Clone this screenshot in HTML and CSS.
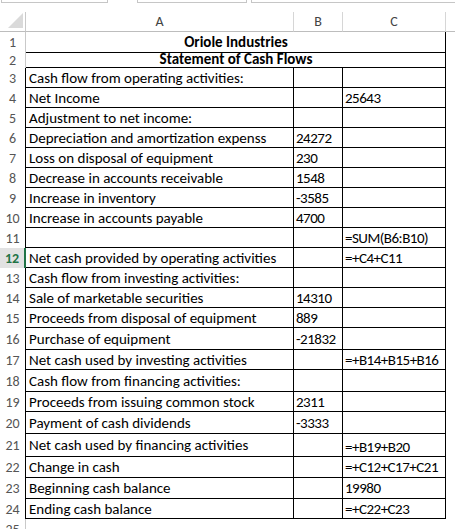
FILE: index.html
```html
<!DOCTYPE html>
<html lang="en">
<head>
    <meta charset="UTF-8">
    <meta name="viewport" content="width=device-width, initial-scale=1.0">
    <title>Statement of Cash Flows</title>
    <link rel="stylesheet" href="styles.css">
</head>
<body>
    <div class="toolbar">
        <div class="box name-box"></div>
        <div class="box fx-box"></div>
        <div class="box formula-box"></div>
    </div>

    <div class="sheet">
        <div class="row head-row">
            <div class="corner">
                <svg width="15" height="15" viewBox="0 0 15 15"><polygon points="15,0 15,15 0,15" fill="#dadada"/></svg>
            </div>
            <div class="col-head">A</div>
            <div class="col-head">B</div>
            <div class="col-head">C</div>
            <div class="col-head filler"></div>
        </div>

        <div class="row h21">
            <div class="num">1</div>
            <div class="cell title">Oriole Industries</div>
        </div>
        <div class="row h15">
            <div class="num">2</div>
            <div class="cell title">Statement of Cash Flows</div>
        </div>

        <div class="row boxed">
            <div class="num">3</div>
            <div class="cell">Cash flow from operating activities:</div>
            <div class="cell"></div>
            <div class="cell"></div>
        </div>
        <div class="row boxed">
            <div class="num">4</div>
            <div class="cell">Net Income</div>
            <div class="cell"></div>
            <div class="cell">25643</div>
        </div>
        <div class="row boxed">
            <div class="num">5</div>
            <div class="cell">Adjustment to net income:</div>
            <div class="cell"></div>
            <div class="cell"></div>
        </div>
        <div class="row boxed">
            <div class="num">6</div>
            <div class="cell">Depreciation and amortization expenss</div>
            <div class="cell">24272</div>
            <div class="cell"></div>
        </div>
        <div class="row boxed">
            <div class="num">7</div>
            <div class="cell">Loss on disposal of equipment</div>
            <div class="cell">230</div>
            <div class="cell"></div>
        </div>
        <div class="row boxed">
            <div class="num">8</div>
            <div class="cell">Decrease in accounts receivable</div>
            <div class="cell">1548</div>
            <div class="cell"></div>
        </div>
        <div class="row boxed">
            <div class="num">9</div>
            <div class="cell">Increase in inventory</div>
            <div class="cell">-3585</div>
            <div class="cell"></div>
        </div>
        <div class="row boxed">
            <div class="num">10</div>
            <div class="cell">Increase in accounts payable</div>
            <div class="cell">4700</div>
            <div class="cell"></div>
        </div>
        <div class="row boxed">
            <div class="num">11</div>
            <div class="cell"></div>
            <div class="cell"></div>
            <div class="cell">=SUM(B6:B10)</div>
        </div>
        <div class="row boxed active">
            <div class="num">12</div>
            <div class="cell">Net cash provided by operating activities</div>
            <div class="cell"></div>
            <div class="cell">=+C4+C11</div>
        </div>
        <div class="row boxed">
            <div class="num">13</div>
            <div class="cell">Cash flow from investing activities:</div>
            <div class="cell"></div>
            <div class="cell"></div>
        </div>
        <div class="row boxed">
            <div class="num">14</div>
            <div class="cell">Sale of marketable securities</div>
            <div class="cell">14310</div>
            <div class="cell"></div>
        </div>
        <div class="row boxed">
            <div class="num">15</div>
            <div class="cell">Proceeds from disposal of equipment</div>
            <div class="cell">889</div>
            <div class="cell"></div>
        </div>
        <div class="row boxed h22">
            <div class="num">16</div>
            <div class="cell">Purchase of equipment</div>
            <div class="cell">-21832</div>
            <div class="cell"></div>
        </div>
        <div class="row boxed">
            <div class="num">17</div>
            <div class="cell">Net cash used by investing activities</div>
            <div class="cell"></div>
            <div class="cell">=+B14+B15+B16</div>
        </div>
        <div class="row boxed h22">
            <div class="num">18</div>
            <div class="cell">Cash flow from financing activities:</div>
            <div class="cell"></div>
            <div class="cell"></div>
        </div>
        <div class="row boxed">
            <div class="num">19</div>
            <div class="cell">Proceeds from issuing common stock</div>
            <div class="cell">2311</div>
            <div class="cell"></div>
        </div>
        <div class="row boxed h22">
            <div class="num">20</div>
            <div class="cell">Payment of cash dividends</div>
            <div class="cell">-3333</div>
            <div class="cell"></div>
        </div>
        <div class="row boxed h23">
            <div class="num">21</div>
            <div class="cell">Net cash used by financing activities</div>
            <div class="cell"></div>
            <div class="cell low">=+B19+B20</div>
        </div>
        <div class="row boxed h21">
            <div class="num">22</div>
            <div class="cell">Change in cash</div>
            <div class="cell"></div>
            <div class="cell">=+C12+C17+C21</div>
        </div>
        <div class="row boxed h21">
            <div class="num">23</div>
            <div class="cell">Beginning cash balance</div>
            <div class="cell"></div>
            <div class="cell">19980</div>
        </div>
        <div class="row boxed">
            <div class="num">24</div>
            <div class="cell">Ending cash balance</div>
            <div class="cell"></div>
            <div class="cell">=+C22+C23</div>
        </div>
        <div class="row">
            <div class="num">25</div>
        </div>
    </div>
</body>
</html>
```

FILE: styles.css
```css
* {
    margin: 0;
    padding: 0;
    box-sizing: border-box;
}

html, body {
    overflow: hidden;
}

body {
    font-family: 'Carlito', 'Lato', 'Liberation Sans', sans-serif;
    font-size: 15px;
    color: #000;
    background: #fff;
}

/* strip left over from the formula bar */
.toolbar {
    display: flex;
    height: 12px;
    padding-left: 1px;
}

.box {
    height: 3px;
    border: 1px solid #c6c6c6;
    border-top: none;
}

.name-box {
    width: 107px;
}

.fx-box {
    width: 110px;
    margin-left: 29px;
}

.formula-box {
    flex: 1;
    margin-left: 4px;
    border-right: none;
}

/* grid */
.row {
    display: grid;
    grid-template-columns: 26px 268px 49px 103px 1fr;
    grid-template-rows: minmax(0, 1fr);
    height: 20px;
}

.h15 { height: 15px; }
.h21 { height: 21px; }
.h22 { height: 22px; }
.h23 { height: 23px; }

.head-row {
    height: 20px;
}

.corner {
    border-right: 1px solid #c9c9c9;
    border-bottom: 1px solid #bdbdbd;
    display: flex;
    align-items: flex-end;
    justify-content: flex-end;
    padding: 0 2px 3px 0;
}

.corner svg {
    display: block;
}

.col-head {
    border-right: 1px solid #d6d6d6;
    border-bottom: 1px solid #bdbdbd;
    color: #444;
    font-size: 14px;
    display: flex;
    align-items: center;
    justify-content: center;
}

.col-head.filler {
    border-right: none;
}

.num {
    border-right: 1px solid #c9c9c9;
    color: #555;
    font-size: 14px;
    display: flex;
    align-items: center;
    justify-content: center;
}

.boxed .num {
    border-right-color: #000;
}

.active .num {
    background: #e2e2e2;
    color: #217346;
    font-weight: 700;
    border-right: 2px solid #217346;
}

.cell {
    border-right: 1px solid #000;
    border-bottom: 1px solid #000;
    padding: 0 2px 0 3px;
    white-space: nowrap;
    display: flex;
    align-items: center;
}

/* columns B and C hold numbers and formulas */
.cell + .cell {
    padding-left: 2px;
    letter-spacing: -0.5px;
}

.cell.low {
    padding-top: 3px;
}

.title {
    grid-column: span 3;
    justify-content: center;
    font-weight: 700;
}

.h15 .title {
    padding-bottom: 3px;
}
```
